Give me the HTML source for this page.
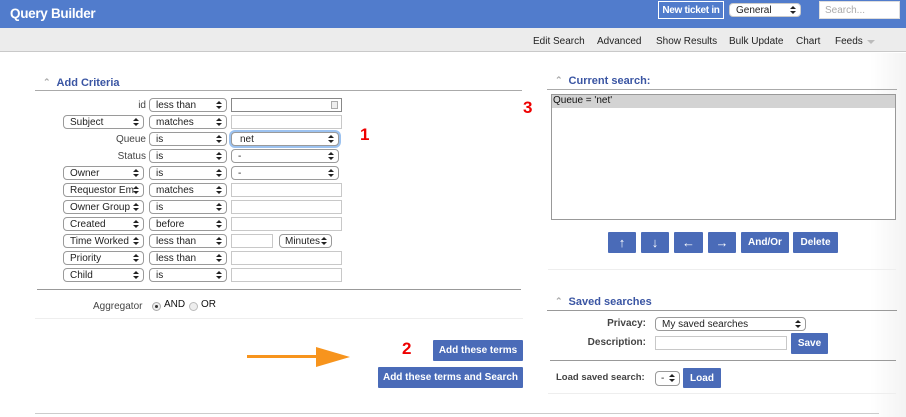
<!DOCTYPE html>
<html><head><meta charset="utf-8"><style>
*{box-sizing:border-box;margin:0;padding:0}
body{width:906px;height:417px;position:relative;background:#fff;font-family:"Liberation Sans",Arial,sans-serif;font-size:10px;color:#222;overflow:hidden}
.a{position:absolute;white-space:nowrap}
.sel{position:absolute;height:14px;border:1px solid #9a9a9a;border-radius:4px;background:#fff;font-size:10px;line-height:13px;padding-left:6px;color:#222;white-space:nowrap;overflow:hidden}
.sel:after{content:"";position:absolute;right:4px;top:2px;width:0;height:0;border-left:3px solid transparent;border-right:3px solid transparent;border-bottom:3px solid #222}
.sel:before{content:"";position:absolute;right:4px;top:7px;width:0;height:0;border-left:3px solid transparent;border-right:3px solid transparent;border-top:3px solid #222;z-index:2}
.inp{position:absolute;height:14px;border:1px solid #c8c8c8;background:#fff}
.lbl{position:absolute;text-align:right;color:#444;font-size:10px;line-height:15px;white-space:nowrap}
.btn{position:absolute;background:#4a6bb8;color:#fff;font-weight:bold;font-size:10px;text-align:center;border-radius:1px;white-space:nowrap}
.hd{position:absolute;color:#3a55a3;font-weight:bold;font-size:11px;white-space:nowrap}
.hd i{font-style:normal;color:#aaa;font-size:9px;margin-right:6px;position:relative;top:-1px}
.red{position:absolute;color:#e00;font-weight:bold;font-size:17px}
.nav{position:absolute;top:36px;font-size:10px;white-space:nowrap}
.ar{font-size:13px;line-height:21px}
</style></head><body>
<div class="a" style="left:0;top:0;width:906px;height:28px;background:#517ccc"></div>
<div class="a" style="left:10px;top:6px;color:#fff;font-weight:bold;font-size:13.5px;letter-spacing:-0.3px">Query Builder</div>
<div class="a" style="left:658px;top:1px;width:66px;height:18px;border:1px solid #fff;color:#fff;font-weight:bold;font-size:10px;line-height:17px;text-align:center;letter-spacing:-0.3px">New ticket in</div>
<div class="sel" style="left:729px;top:3px;width:72px;height:14px;border-color:#ccc">General</div>
<div class="a" style="left:819px;top:1px;width:81px;height:18px;background:#fff;border:1px solid #ddd;color:#aaa;font-size:10px;line-height:17px;padding-left:5px">Search...</div>
<div class="a" style="left:0;top:28px;width:906px;height:24px;background:#ececec;border-bottom:1px solid #c9c9c9"></div>
<div class="nav" style="left:533px">Edit Search</div>
<div class="nav" style="left:597px">Advanced</div>
<div class="nav" style="left:656px">Show Results</div>
<div class="nav" style="left:729px">Bulk Update</div>
<div class="nav" style="left:796px">Chart</div>
<div class="nav" style="left:835px">Feeds</div>
<div class="a" style="left:867px;top:40px;border-left:4px solid transparent;border-right:4px solid transparent;border-top:4px solid #bbb"></div>
<div class="a" style="left:870px;top:53px;width:36px;height:364px;background:linear-gradient(to right,#fff,#f3f3f3)"></div>

<div class="hd" style="left:43px;top:77px"><i>&#8963;</i>Add Criteria</div>
<div class="a" style="left:35px;top:90px;width:487px;height:1px;background:#aaa"></div>

<div class="lbl" style="left:60px;top:98px;width:86px">id</div>
<div class="sel" style="left:149px;top:98px;width:78px">less than</div>
<div class="inp" style="left:231px;top:98px;width:111px;border-color:#888"><div class="a" style="right:3px;top:2px;width:7px;height:8px;border:1px solid #aaa;background:#eee"></div></div>

<div class="sel" style="left:63px;top:115px;width:81px">Subject</div>
<div class="sel" style="left:149px;top:115px;width:78px">matches</div>
<div class="inp" style="left:231px;top:115px;width:111px"></div>

<div class="lbl" style="left:60px;top:132px;width:86px">Queue</div>
<div class="sel" style="left:149px;top:132px;width:78px">is</div>
<div class="sel" style="left:231px;top:132px;width:108px;box-shadow:0 0 0 2px #9cc2f0;padding-left:8px">net</div>

<div class="lbl" style="left:60px;top:149px;width:86px">Status</div>
<div class="sel" style="left:149px;top:149px;width:78px">is</div>
<div class="sel" style="left:231px;top:149px;width:108px">-</div>

<div class="sel" style="left:63px;top:166px;width:81px">Owner</div>
<div class="sel" style="left:149px;top:166px;width:78px">is</div>
<div class="sel" style="left:231px;top:166px;width:108px">-</div>

<div class="sel" style="left:63px;top:183px;width:81px">Requestor Em</div>
<div class="sel" style="left:149px;top:183px;width:78px">matches</div>
<div class="inp" style="left:231px;top:183px;width:111px"></div>

<div class="sel" style="left:63px;top:200px;width:81px">Owner Group</div>
<div class="sel" style="left:149px;top:200px;width:78px">is</div>
<div class="inp" style="left:231px;top:200px;width:111px"></div>

<div class="sel" style="left:63px;top:217px;width:81px">Created</div>
<div class="sel" style="left:149px;top:217px;width:78px">before</div>
<div class="inp" style="left:231px;top:217px;width:111px"></div>

<div class="sel" style="left:63px;top:234px;width:81px">Time Worked</div>
<div class="sel" style="left:149px;top:234px;width:78px">less than</div>
<div class="inp" style="left:231px;top:234px;width:42px"></div>
<div class="sel" style="left:279px;top:234px;width:53px;padding-left:5px">Minutes</div>

<div class="sel" style="left:63px;top:251px;width:81px">Priority</div>
<div class="sel" style="left:149px;top:251px;width:78px">less than</div>
<div class="inp" style="left:231px;top:251px;width:111px"></div>

<div class="sel" style="left:63px;top:268px;width:81px">Child</div>
<div class="sel" style="left:149px;top:268px;width:78px">is</div>
<div class="inp" style="left:231px;top:268px;width:111px"></div>

<div class="red" style="left:360px;top:125px">1</div>
<div class="a" style="left:37px;top:289px;width:484px;height:1px;background:#999"></div>
<div class="a" style="left:35px;top:318px;width:488px;height:1px;background:#eee"></div>
<div class="a" style="left:93px;top:301px;color:#444">Aggregator</div>
<div class="a" style="left:152px;top:302px;width:9px;height:9px;border:1px solid #aaa;border-radius:50%;background:#eee"><div class="a" style="left:2px;top:2px;width:3px;height:3px;border-radius:50%;background:#333"></div></div>
<div class="a" style="left:164px;top:299px;color:#111">AND</div>
<div class="a" style="left:189px;top:302px;width:9px;height:9px;border:1px solid #bbb;border-radius:50%;background:#eee"></div>
<div class="a" style="left:201px;top:299px;color:#111">OR</div>

<div class="a" style="left:247px;top:355px;width:72px;height:3px;background:#f7941d"></div>
<div class="a" style="left:316px;top:347px;border-top:10px solid transparent;border-bottom:10px solid transparent;border-left:34px solid #f7941d"></div>
<div class="red" style="left:402px;top:339px">2</div>
<div class="btn" style="left:433px;top:340px;width:90px;height:21px;line-height:22px">Add these terms</div>
<div class="btn" style="left:378px;top:367px;width:145px;height:21px;line-height:22px">Add these terms and Search</div>
<div class="a" style="left:35px;top:413px;width:844px;height:1px;background:#ccc"></div>

<div class="hd" style="left:555px;top:75px"><i>&#8963;</i>Current search:</div>
<div class="a" style="left:547px;top:89px;width:350px;height:1px;background:#aaa"></div>
<div class="red" style="left:523px;top:98px">3</div>
<div class="a" style="left:551px;top:94px;width:345px;height:126px;border:1px solid #999;background:#fff">
<div style="height:13px;background:#d3d3d3;font-size:10px;line-height:12px;padding-left:1px;color:#111">Queue = 'net'</div></div>
<div class="btn ar" style="left:608px;top:232px;width:28px;height:21px">&#8593;</div>
<div class="btn ar" style="left:641px;top:232px;width:28px;height:21px">&#8595;</div>
<div class="btn ar" style="left:674px;top:232px;width:29px;height:21px">&#8592;</div>
<div class="btn ar" style="left:708px;top:232px;width:28px;height:21px">&#8594;</div>
<div class="btn" style="left:741px;top:232px;width:48px;height:21px;line-height:22px">And/Or</div>
<div class="btn" style="left:793px;top:232px;width:45px;height:21px;line-height:22px">Delete</div>
<div class="a" style="left:548px;top:269px;width:348px;height:1px;background:#eee"></div>

<div class="hd" style="left:555px;top:296px"><i>&#8963;</i>Saved searches</div>
<div class="a" style="left:547px;top:310px;width:350px;height:1px;background:#999"></div>
<div class="a" style="left:560px;top:318px;width:86px;text-align:right;color:#444;font-weight:bold">Privacy:</div>
<div class="sel" style="left:655px;top:317px;width:151px">My saved searches</div>
<div class="a" style="left:560px;top:337px;width:86px;text-align:right;color:#444;font-weight:bold">Description:</div>
<div class="inp" style="left:655px;top:336px;width:132px"></div>
<div class="btn" style="left:791px;top:333px;width:37px;height:21px;line-height:22px">Save</div>
<div class="a" style="left:550px;top:360px;width:346px;height:1px;background:#999"></div>
<div class="a" style="left:556px;top:372px;color:#444;font-weight:bold;font-size:9.5px">Load saved search:</div>
<div class="sel" style="left:655px;top:371px;width:25px;height:15px;padding-left:5px">-</div>
<div class="btn" style="left:683px;top:368px;width:38px;height:20px;line-height:21px">Load</div>
<div class="a" style="left:548px;top:393px;width:348px;height:1px;background:#eee"></div>
</body></html>
